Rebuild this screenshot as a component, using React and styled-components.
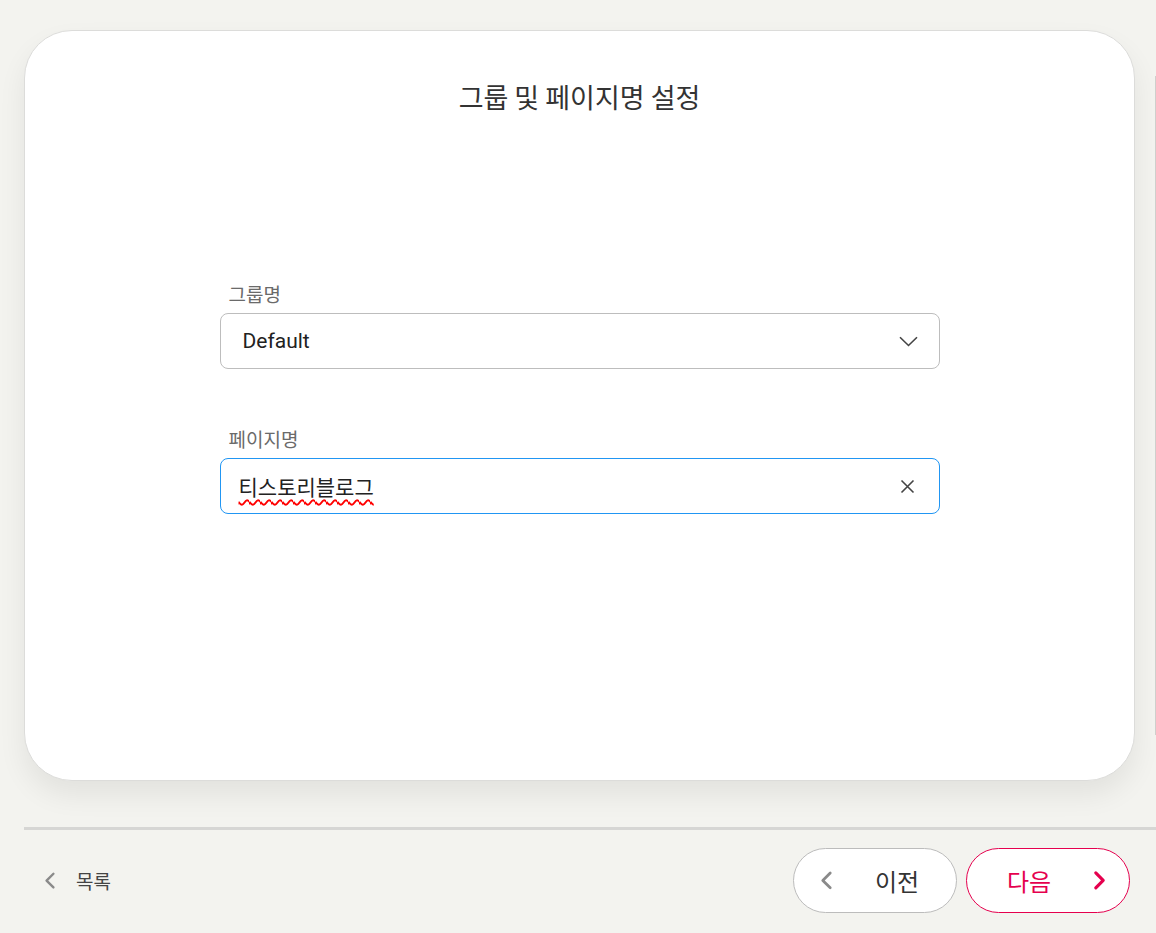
import React from 'react';
import styled, { createGlobalStyle } from 'styled-components';

const GlobalStyle = createGlobalStyle`
  html, body {
    margin: 0;
    padding: 0;
    background-color: #f3f3ef;
    font-family: Roboto, "Noto Sans CJK KR", sans-serif;
  }
`;

const Page = styled.div`
  position: relative;
  width: 1156px;
  height: 933px;
  overflow: hidden;
  background-color: #f3f3ef;
`;

const ScrollThumb = styled.div`
  position: absolute;
  top: 76px;
  right: 0;
  width: 1px;
  height: 659px;
  background-color: #cfcfcc;
`;

const Card = styled.div`
  height: 751px;
  box-sizing: border-box;
  margin: 30px 21px 0 24px;
  padding-top: 48px;
  background-color: white;
  border: 1px solid #dcdcda;
  border-radius: 48px;
  box-shadow: 0 14px 28px rgba(0, 0, 0, 0.07);
`;

const Title = styled.h2`
  margin: 0;
  text-align: center;
  font-family: "Noto Sans CJK KR", sans-serif;
  font-weight: 400;
  font-size: 27px;
  line-height: 36px;
  color: #333;
`;

const Form = styled.div`
  width: 720px;
  margin: 167px auto 0;
  display: flex;
  flex-direction: column;
`;

const Field = styled.div`
  display: flex;
  flex-direction: column;
  gap: 7px;
  margin-bottom: 58px;
`;

const Label = styled.label`
  padding-left: 9px;
  font-family: "Noto Sans CJK KR", sans-serif;
  font-size: 19px;
  line-height: 24px;
  color: #6a6a6a;
`;

const Box = styled.div`
  height: 56px;
  box-sizing: border-box;
  display: flex;
  align-items: center;
  justify-content: space-between;
  padding: ${(p) => (p.$focused ? '0 24px 0 18px' : '0 21px 0 22px')};
  background-color: white;
  border: 1px solid ${(p) => (p.$focused ? '#2196f3' : '#bdbdbd')};
  border-radius: 8px;
`;

const Value = styled.span`
  font-size: 21px;
  color: #222;
  ${(p) =>
    p.$misspelled &&
    `
    text-decoration: underline wavy #f00;
    text-decoration-thickness: 1.5px;
    text-underline-offset: 4px;
  `}
`;

const Divider = styled.hr`
  margin: 46px 0 0 24px;
  border: none;
  height: 3px;
  background-color: #d6d6d4;
`;

const Footer = styled.div`
  display: flex;
  align-items: center;
  justify-content: space-between;
  padding: 18px 26px 0 44px;
`;

const BackLink = styled.a`
  display: flex;
  align-items: center;
  gap: 20px;
  font-family: "Noto Sans CJK KR", sans-serif;
  font-size: 19px;
  color: #444;
  cursor: pointer;
`;

const Buttons = styled.div`
  display: flex;
  gap: 9px;
`;

const NavButton = styled.button`
  width: 164px;
  height: 65px;
  box-sizing: border-box;
  display: flex;
  align-items: center;
  gap: 42px;
  padding: ${(p) => (p.$primary ? '0 0 0 40px' : '0 0 0 26px')};
  background-color: white;
  border: 1px solid ${(p) => (p.$primary ? '#e5004e' : '#bcbcbc')};
  border-radius: 33px;
  font-family: "Noto Sans CJK KR", sans-serif;
  font-size: 24px;
  color: ${(p) => (p.$primary ? '#e5004e' : '#333')};
  cursor: pointer;
`;

const Chevron = ({ dir = 'left', color = '#888', width = 2.6, size = 14 }) => (
  <svg width={size} height={size * 1.6} viewBox="0 0 14 22" fill="none">
    <path
      d={dir === 'left' ? 'M11 3 L3 11 L11 19' : 'M3 3 L11 11 L3 19'}
      stroke={color}
      strokeWidth={width}
      strokeLinecap="round"
      strokeLinejoin="round"
    />
  </svg>
);

const ChevronDown = () => (
  <svg width="19" height="11" viewBox="0 0 19 11" fill="none">
    <path d="M1 1.2 L9.5 9.5 L18 1.2" stroke="#444" strokeWidth="1.6" />
  </svg>
);

const ClearIcon = () => (
  <svg width="15" height="15" viewBox="0 0 15 15" fill="none">
    <path d="M1.5 1.5 L13.5 13.5 M13.5 1.5 L1.5 13.5" stroke="#444" strokeWidth="1.6" />
  </svg>
);

const App = () => {
  return (
    <>
      <GlobalStyle />
      <Page>
        <Card>
          <Title>그룹 및 페이지명 설정</Title>
          <Form>
            <Field>
              <Label>그룹명</Label>
              <Box>
                <Value>Default</Value>
                <ChevronDown />
              </Box>
            </Field>
            <Field>
              <Label>페이지명</Label>
              <Box $focused>
                <Value $misspelled>티스토리블로그</Value>
                <ClearIcon />
              </Box>
            </Field>
          </Form>
        </Card>
        <Divider />
        <Footer>
          <BackLink>
            <Chevron dir="left" color="#8a8a8a" size={12} width={2.8} />
            목록
          </BackLink>
          <Buttons>
            <NavButton>
              <Chevron dir="left" color="#8a8a8a" size={13} width={3} />
              이전
            </NavButton>
            <NavButton $primary>
              다음
              <Chevron dir="right" color="#e5004e" size={13} width={3.4} />
            </NavButton>
          </Buttons>
        </Footer>
        <ScrollThumb />
      </Page>
    </>
  );
};

export default App;
